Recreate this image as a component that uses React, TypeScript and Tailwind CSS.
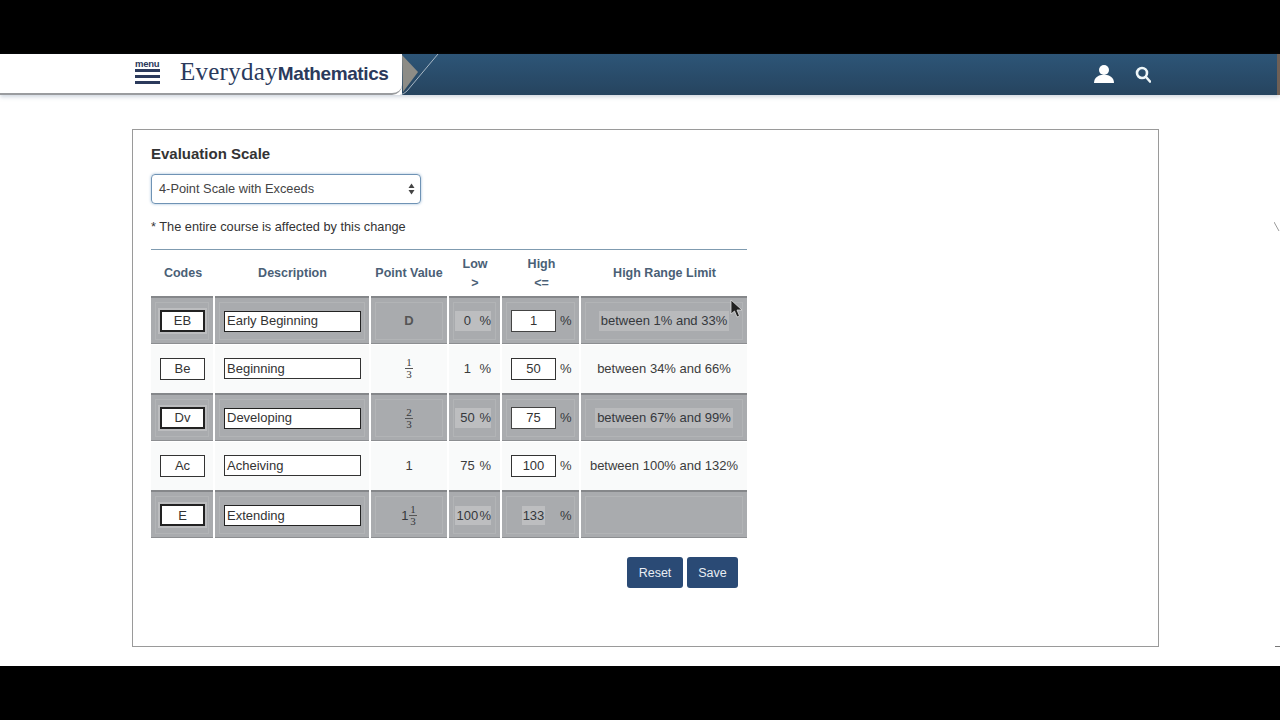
const sans = "font-['Liberation_Sans',Arial,sans-serif]";

type Row = {
  code: string;
  desc: string;
  point: React.ReactNode;
  low: string;
  high: string;
  limit: string;
  gray: boolean;
};

function Frac({ top, bottom }: { top: string; bottom: string }) {
  return (
    <span className="inline-flex flex-col items-center font-['Liberation_Serif',serif] text-[11px] leading-[11px]">
      <span className="border-b border-[#555] px-px">{top}</span>
      <span>{bottom}</span>
    </span>
  );
}

const rows: Row[] = [
  { code: "EB", desc: "Early Beginning", point: <span className="font-bold text-[#555]">D</span>, low: "0", high: "1", limit: "between 1% and 33%", gray: true },
  { code: "Be", desc: "Beginning", point: <Frac top="1" bottom="3" />, low: "1", high: "50", limit: "between 34% and 66%", gray: false },
  { code: "Dv", desc: "Developing", point: <Frac top="2" bottom="3" />, low: "50", high: "75", limit: "between 67% and 99%", gray: true },
  { code: "Ac", desc: "Acheiving", point: "1", low: "75", high: "100", limit: "between 100% and 132%", gray: false },
  {
    code: "E",
    desc: "Extending",
    point: (
      <span className="inline-flex items-center gap-px">
        1<Frac top="1" bottom="3" />
      </span>
    ),
    low: "100",
    high: "133",
    limit: "",
    gray: true,
  },
];

const gridCols = "grid grid-cols-[62px_154px_76px_51px_77px_166px] gap-x-[2px]";

function Cell({ gray, children, className = "" }: { gray: boolean; children?: React.ReactNode; className?: string }) {
  return (
    <div
      className={`flex items-center justify-center ${
        gray
          ? "bg-[#a9abae] border-t-2 border-[#85878a] shadow-[inset_0_-1px_0_#8c8e91,inset_0_0_0_4px_#a9abae,inset_0_0_0_5px_#b2b4b6]"
          : "bg-[#f9fafa]"
      } ${className}`}
    >
      {children}
    </div>
  );
}

function TableRow({ row }: { row: Row }) {
  const { gray } = row;
  const txt = gray ? "text-[#35383c]" : "text-[#3c3c3c]";
  return (
    <div className={`${gridCols} h-[48px] mb-[0.6px] text-[13px] ${txt}`}>
      <Cell gray={gray}>
        <div
          className={`ml-px w-[45px] h-[22px] bg-white flex items-center justify-center text-[#333] ${
            gray ? "border-2 border-[#222] shadow-[0_0_0_2px_#bcbdbf]" : "border border-[#333]"
          }`}
        >
          {row.code}
        </div>
      </Cell>
      <Cell gray={gray}>
        <div
          className={`ml-px w-[137px] h-[21px] bg-white flex items-center pl-[2px] text-[#333] ${
            gray ? "border-[1.5px] border-[#222]" : "border border-[#333]"
          }`}
        >
          {row.desc}
        </div>
      </Cell>
      <Cell gray={gray}>{row.point}</Cell>
      <Cell gray={gray} className="justify-end pr-[9px]">
        <span className={`w-[24px] text-center ${gray ? "bg-[#bdbec0]" : ""}`}>{row.low}</span>
        <span className={gray ? "bg-[#bdbec0]" : ""}>%</span>
      </Cell>
      <Cell gray={gray} className="justify-start pl-[9px]">
        {row.code === "E" ? (
          <div className="w-[45px] h-[22px] flex items-center justify-center">
            <span className="bg-[#bdbec0] px-px">{row.high}</span>
          </div>
        ) : (
          <div className={`w-[45px] h-[22px] bg-white flex items-center justify-center text-[#333] ${gray ? "border border-[#444]" : "border border-[#333]"}`}>
            {row.high}
          </div>
        )}
        <span className="ml-[4px]">%</span>
      </Cell>
      <Cell gray={gray}>
        {row.limit && <span className={gray ? "bg-[#b9babc] px-[2px]" : ""}>{row.limit}</span>}
      </Cell>
    </div>
  );
}

export default function App() {
  return (
    <div className={`w-[1280px] h-[720px] bg-black flex flex-col overflow-hidden relative ${sans}`}>
      <div className="h-[54px] shrink-0 bg-black" />

      {/* Header */}
      <header className="h-[41px] shrink-0 relative z-10 flex bg-white shadow-[0_2px_4px_rgba(120,140,165,0.35)]">
        <div className="w-[402px] shrink-0 bg-white border-b-2 border-[#9a9c9f] rounded-br-[10px] flex items-start pl-[135px] relative z-10">
          <div className="w-[25px] flex flex-col mt-[5px]">
            <span className="text-[9.5px] leading-[9px] font-bold text-[#2b3a5c] tracking-tight">menu</span>
            <span className="h-[3px] bg-[#2b3a5c] mt-[1px]" />
            <span className="h-[3px] bg-[#2b3a5c] mt-[3px]" />
            <span className="h-[3px] bg-[#2b3a5c] mt-[3px]" />
          </div>
          <div className="ml-[20px] mt-[6px] text-[#2b3a5c] whitespace-nowrap leading-[24px]">
            <span className="font-['Liberation_Serif',serif] text-[25px] tracking-[0.25px]">Everyday</span>
            <span className="font-bold text-[19px] tracking-[-0.4px]">Mathematics</span>
          </div>
        </div>
        <div className="flex-1 bg-gradient-to-b from-[#2d5577] to-[#26445f] flex items-center justify-end pr-[129px] gap-[20px]">
          <svg width="22" height="20" viewBox="0 0 22 20" className="mt-[-1px]">
            <circle cx="11" cy="6" r="5" fill="#fff" />
            <path d="M1 19 C1 13 6 11.5 8 11 L14 11 C16 11.5 21 13 21 19 Z" fill="#fff" />
          </svg>
          <svg width="16" height="17" viewBox="0 0 16 17" fill="none" stroke="#eef6f8" strokeWidth="2.6">
            <circle cx="7" cy="7" r="5" />
            <path d="M11 11 L15 15.5" strokeLinecap="round" />
          </svg>
        </div>
        <svg width="60" height="41" viewBox="0 0 60 41" className="absolute left-[398px] top-0 z-20">
          <path d="M4 1 L20 18 L5 38 Z" fill="#8d8c86" />
          <path d="M2 41 Q6 40 9 37 L40 0" stroke="#c9d3dc" strokeWidth="0.8" fill="none" />
        </svg>
        <div className="absolute right-0 top-0 w-[3px] h-[41px] bg-[#6e5f55]" />
      </header>

      {/* Page */}
      <main className="h-[571px] shrink-0 bg-white pt-[34px] pl-[132px] relative">
        <section className="w-[1027px] h-[518px] border border-[#9a9a9a] pl-[18px] pt-[15px]">
          <h2 className="text-[15px] leading-[18px] font-bold text-[#333]">Evaluation Scale</h2>
          <div className="mt-[11px] w-[270px] h-[30px] rounded-[4px] border border-[#6f93b5] shadow-[0_0_3px_#9dbbd6] flex items-center justify-between pl-[7px] pr-[5px] text-[12.8px] text-[#444]">
            <span>4-Point Scale with Exceeds</span>
            <svg width="7" height="12" viewBox="0 0 7 12" fill="#444">
              <path d="M3.5 0.5 L6.5 5 L0.5 5 Z" />
              <path d="M3.5 11.5 L6.5 7 L0.5 7 Z" />
            </svg>
          </div>
          <p className="mt-[15px] text-[12.75px] leading-[16px] text-[#333]">* The entire course is affected by this change</p>

          <div className="mt-[14px] w-[596px] border-t border-[#7f9bb0]">
            <div className={`${gridCols} h-[46px] text-[12.5px] font-bold text-[#4a6076] text-center`}>
              <div className="flex items-center justify-center pl-[2px]">Codes</div>
              <div className="flex items-center justify-center pl-px">Description</div>
              <div className="flex items-center justify-center">Point Value</div>
              <div className="flex flex-col items-center justify-center leading-[19px] pl-px pt-px">
                <span>Low</span>
                <span>&gt;</span>
              </div>
              <div className="flex flex-col items-center justify-center leading-[19px] pl-[2px] pt-px">
                <span>High</span>
                <span>&lt;=</span>
              </div>
              <div className="flex items-center justify-center pl-px">High Range Limit</div>
            </div>
            {rows.map((r) => (
              <TableRow key={r.code} row={r} />
            ))}
            <div className="flex justify-end gap-[4px] mt-[19px] pr-[9px]">
              <button className="w-[56px] h-[31px] rounded-[3px] bg-[#2a4a75] text-[#e8edf3] text-[12.5px] font-medium">Reset</button>
              <button className="w-[51px] h-[31px] rounded-[3px] bg-[#2a4a75] text-[#e8edf3] text-[12.5px] font-medium">Save</button>
            </div>
          </div>
        </section>

        {/* Cursor */}
        <svg width="13" height="19" viewBox="0 0 13 19" className="absolute left-[730px] top-[204px]">
          <path d="M1 1 L1 15 L4.5 12 L7 18 L9.5 17 L7 11 L12 11 Z" fill="#222" stroke="#ddd" strokeWidth="0.8" />
        </svg>
        {/* Stray marks at the right edge */}
        <svg width="6" height="10" viewBox="0 0 6 10" className="absolute right-0 top-[127px]">
          <path d="M0 0 L5 9" stroke="#9a9a9a" strokeWidth="1" fill="none" />
        </svg>
        <div className="absolute right-0 top-[551px] w-[5px] h-px bg-[#777]" />
      </main>

      <div className="flex-1 bg-black" />
    </div>
  );
}
